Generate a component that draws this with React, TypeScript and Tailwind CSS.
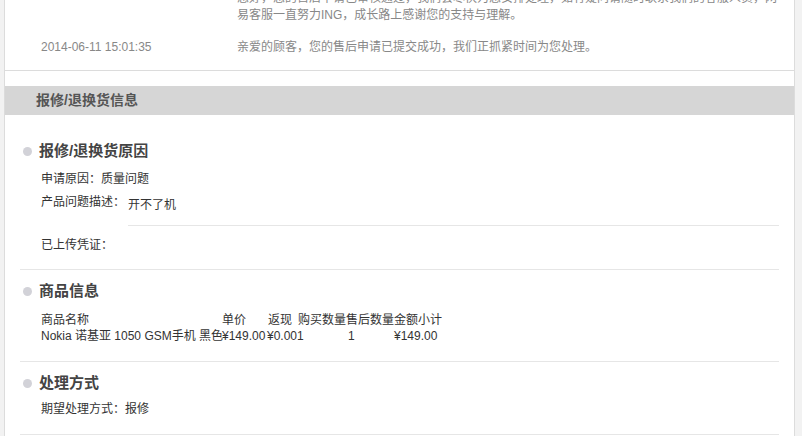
import React from "react";

const font = "font-['Liberation_Sans','Noto_Sans_CJK_SC',sans-serif]";

function SectionTitle({ title }: { title: string }) {
  return (
    <div className="flex items-center h-[20px]">
      <span className="ml-[3px] w-[9px] h-[9px] rounded-full bg-[#d2d2d8]" />
      <span className="ml-[7px] text-[15px] leading-[20px] font-bold text-[#444]">{title}</span>
    </div>
  );
}

export default function App() {
  return (
    <div className={`w-[802px] h-[436px] overflow-hidden bg-[#f2f2f2] ${font} text-[12px]`}>
      <div className="ml-[4px] w-[791px] h-full bg-white border-x border-[#dcdcdc]">
        {/* progress log */}
        <div className="h-[71px] border-b border-[#dcdcdc] overflow-hidden">
          <div className="grid grid-cols-[232px_1fr] text-[#888] leading-[17px]">
            <div />
            <div className="mt-[-10px] whitespace-nowrap">
              <div>您好，您的售后申请已审核通过，我们会尽快为您安排处理，如有疑问请随时联系我们的客服人员，网</div>
              <div>易客服一直努力ING，成长路上感谢您的支持与理解。</div>
            </div>
            <div className="pl-[36px] mt-[15px]">2014-06-11 15:01:35</div>
            <div className="mt-[15px]">亲爱的顾客，您的售后申请已提交成功，我们正抓紧时间为您处理。</div>
          </div>
        </div>

        <div className="h-[15px]" />

        <div className="h-[29px] bg-[#d6d6d6] pl-[31px] flex items-center text-[14px] font-bold text-[#555]">
          报修/退换货信息
        </div>

        <div className="mx-[15px] text-[#333]">
          {/* reason */}
          <div className="pt-[26px] pb-[12px] border-b border-[#e6e6e6]">
            <SectionTitle title="报修/退换货原因" />
            <div className="pl-[21px] mt-[7px]">
              <div className="leading-[23px]">申请原因：质量问题</div>
              <div className="flex items-start">
                <span className="leading-[23px]">产品问题描述：</span>
                <div className="flex-1 ml-[3px] pt-[3px] pb-[8px] leading-[23px] border-b border-[#e6e6e6]">开不了机</div>
              </div>
              <div className="leading-[23px] mt-[8px]">已上传凭证：</div>
            </div>
          </div>

          {/* goods */}
          <div className="pt-[11px] pb-[17px] border-b border-[#e6e6e6]">
            <SectionTitle title="商品信息" />
            <div className="pl-[21px] mt-[11px] leading-[16px] whitespace-nowrap">
              <div className="grid grid-cols-[181px_46px_30px_48px_48px_48px]">
                <span>商品名称</span>
                <span>单价</span>
                <span>返现</span>
                <span>购买数量</span>
                <span>售后数量</span>
                <span>金额小计</span>
              </div>
              <div className="flex">
                <span className="w-[181px]">Nokia 诺基亚 1050 GSM手机 黑色</span>
                <span className="w-[45px]">¥149.00</span>
                <span className="w-[81px]">¥0.001</span>
                <span className="w-[46px]">1</span>
                <span>¥149.00</span>
              </div>
            </div>
          </div>

          {/* handling */}
          <div className="pt-[11px] pb-[13px] border-b border-[#e6e6e6]">
            <SectionTitle title="处理方式" />
            <div className="pl-[21px] mt-[5px] leading-[23px]">期望处理方式：报修</div>
          </div>
        </div>
      </div>
    </div>
  );
}
